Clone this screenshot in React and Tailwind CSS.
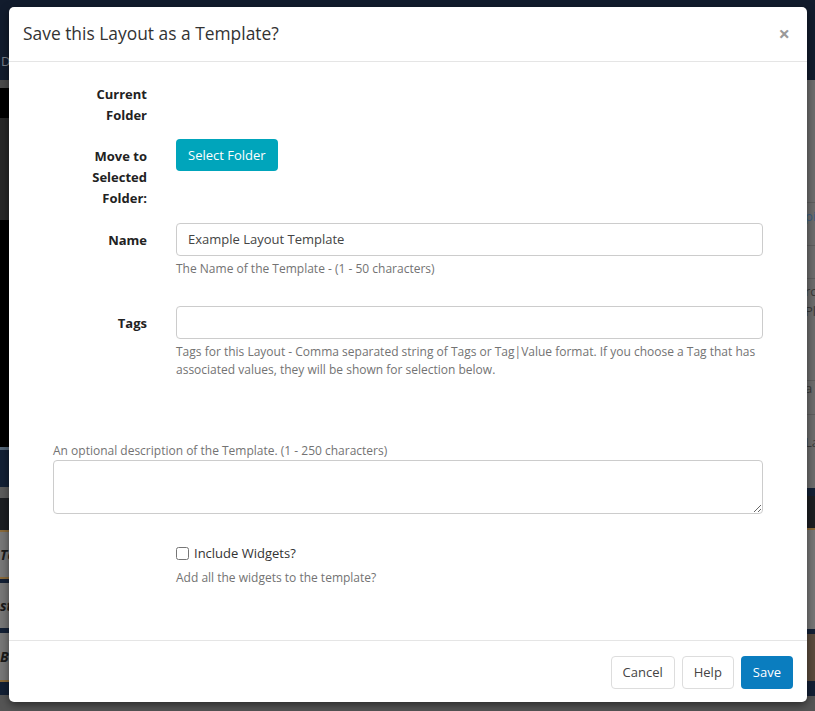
import React from "react";

function Strip({ h, c, children, cls = "" }) {
  return (
    <div className={`w-full flex items-center overflow-hidden ${cls}`} style={{ height: h, background: c }}>
      {children}
    </div>
  );
}

export default function App() {
  const font = { fontFamily: '"Open Sans", "Liberation Sans", sans-serif' };
  return (
    <div className="relative w-[815px] h-[711px] overflow-hidden bg-[#555555]" style={font}>
      {/* dimmed background page */}
      <div className="flex flex-col w-full h-full">
        <div className="h-[80px] w-full bg-[#121c2d] flex items-end pb-[12px]">
          <span className="text-[13px] text-[#7a828c] leading-none pl-[1px]">D</span>
        </div>
        <div className="flex flex-1">
          <div className="w-[400px] flex flex-col">
            <Strip h={8} c="#4b4b4b" />
            <Strip h={30} c="#000000" />
            <Strip h={102} c="#272727" />
            <Strip h={227} c="#000000" />
            <Strip h={3} c="#56687a" />
            <Strip h={37} c="#132035" />
            <Strip h={11} c="#5c5c5c" />
            <Strip h={32} c="#1c1e22" />
            <Strip h={2} c="#8a6a3a" />
            <Strip h={45} c="#787878"><span className="text-[14px] font-bold italic text-[#1a1a1a]">Te</span></Strip>
            <Strip h={2} c="#8a6a3a" />
            <Strip h={4} c="#132035" />
            <Strip h={45} c="#777777"><span className="text-[14px] font-bold italic text-[#1a1a1a]">st</span></Strip>
            <Strip h={5} c="#132035" />
            <Strip h={47} c="#777777"><span className="text-[14px] font-bold italic text-[#1a1a1a]">Bo</span></Strip>
            <Strip h={2} c="#8a6a3a" />
            <Strip h={13} c="#132035" />
            <div className="flex-1 bg-[#555555]" />
          </div>
          <div className="flex-1 flex flex-col items-end">
            <div className="w-[8px] flex flex-col">
              <Strip h={122} c="#6d6d6d" />
              <Strip h={1} c="#5e5e5e" />
              <Strip h={42} c="#6d6d6d" cls="!items-start pt-[4px]"><span className="text-[13px] text-[#3b5e80] leading-[18px] -ml-[2px]">pi</span></Strip>
              <Strip h={1} c="#5e5e5e" />
              <Strip h={32} c="#6d6d6d" />
              <Strip h={1} c="#5e5e5e" />
              <Strip h={101} c="#6d6d6d" cls="flex-col !items-start pt-[2px]">
                <span className="text-[13px] text-[#3a3a3a] leading-[20px] -ml-[2px]">rc</span>
                <span className="text-[13px] text-[#3a3a3a] leading-[20px] -ml-[2px]">Pla</span>
              </Strip>
              <Strip h={1} c="#5e5e5e" />
              <Strip h={33} c="#6d6d6d" cls="!items-start"><span className="text-[13px] leading-[14px] text-[#3a3a3a] -ml-[2px]">a</span></Strip>
              <Strip h={1} c="#5e5e5e" />
              <Strip h={73} c="#6d6d6d" cls="!items-start pt-[18px]"><span className="text-[13px] leading-[18px] text-[#3a3a3a] -ml-[2px]">La</span></Strip>
              <Strip h={8} c="#132035" />
              <Strip h={32} c="#1c1e22" />
              <Strip h={2} c="#8a6a3a" />
              <Strip h={99} c="#777777" />
              <Strip h={5} c="#132035" />
              <Strip h={47} c="#5b4b3d" />
              <Strip h={15} c="#132035" />
            </div>
          </div>
        </div>
      </div>

      {/* modal overlay */}
      <div className="absolute left-[9px] top-[7px] w-[798px] h-[695px] bg-white rounded-[5px] shadow-[0_3px_9px_rgba(0,0,0,0.5)] flex flex-col">
        {/* header */}
        <div className="h-[55px] border-b border-[#e5e5e5] flex items-center justify-between pl-[14px] pr-[17px]">
          <h4 className="text-[17.4px] font-medium text-[#333333] leading-none">Save this Layout as a Template?</h4>
          <span className="text-[20px] font-bold text-[#9a9a9a] leading-none">×</span>
        </div>

        {/* body */}
        <div className="flex-1 px-[44px] pt-[15px] text-[13px] text-[#333333]">
          {/* Current Folder */}
          <div className="grid grid-cols-[94px_1fr] gap-x-[29px] mb-[13px]">
            <div className="pt-[7px] text-right font-bold leading-[21px] text-[#222]">Current<br />Folder</div>
            <div />
          </div>
          {/* Move to */}
          <div className="grid grid-cols-[94px_1fr] gap-x-[29px] mb-[14px]">
            <div className="pt-[7px] text-right font-bold leading-[21px] text-[#222]">Move to<br />Selected<br />Folder:</div>
            <div>
              <button className="h-[32px] px-[12px] rounded-[4px] bg-[#00a5bb] text-white text-[13px] leading-none">Select Folder</button>
            </div>
          </div>
          {/* Name */}
          <div className="grid grid-cols-[94px_1fr] gap-x-[29px] mb-[28px]">
            <div className="pt-[7px] text-right font-bold leading-[21px] text-[#222]">Name</div>
            <div>
              <div className="h-[33px] border border-[#cccccc] rounded-[4px] px-[11px] flex items-center text-[13px] text-[#444]">Example Layout Template</div>
              <p className="mt-[4px] text-[12px] leading-[18px] text-[#737373]">The Name of the Template - (1 - 50 characters)</p>
            </div>
          </div>
          {/* Tags */}
          <div className="grid grid-cols-[94px_1fr] gap-x-[29px]">
            <div className="pt-[7px] text-right font-bold leading-[21px] text-[#222]">Tags</div>
            <div>
              <div className="h-[33px] border border-[#cccccc] rounded-[4px]" />
              <p className="mt-[4px] text-[12px] leading-[18px] text-[#737373]">
                Tags for this Layout - Comma separated string of Tags or Tag|Value format. If you choose a Tag that has associated values, they will be shown for selection below.
              </p>
            </div>
          </div>
          {/* Description */}
          <div className="mt-[63px]">
            <p className="text-[12px] leading-[18px] text-[#737373]">An optional description of the Template. (1 - 250 characters)</p>
            <textarea className="block w-full h-[54px] border border-[#cccccc] rounded-[4px] outline-none" />
          </div>
          {/* Include widgets */}
          <div className="grid grid-cols-[94px_1fr] gap-x-[29px] mt-[29px]">
            <div />
            <div>
              <label className="flex items-center h-[21px] gap-[5px] text-[13px] text-[#333]">
                <input type="checkbox" className="w-[13px] h-[13px] m-0" />
                Include Widgets?
              </label>
              <p className="mt-[5px] text-[12px] leading-[18px] text-[#737373]">Add all the widgets to the template?</p>
            </div>
          </div>
        </div>

        {/* footer */}
        <div className="border-t border-[#e5e5e5] pt-[15px] pb-[13px] pr-[14px] flex justify-end gap-[7px]">
          <button className="h-[33px] px-[11px] border border-[#dddddd] rounded-[4px] bg-white text-[13px] text-[#444]">Cancel</button>
          <button className="h-[33px] px-[11px] border border-[#dddddd] rounded-[4px] bg-white text-[13px] text-[#444]">Help</button>
          <button className="h-[33px] px-[12px] rounded-[4px] bg-[#0a7dbf] text-[13px] text-white">Save</button>
        </div>
      </div>
    </div>
  );
}
